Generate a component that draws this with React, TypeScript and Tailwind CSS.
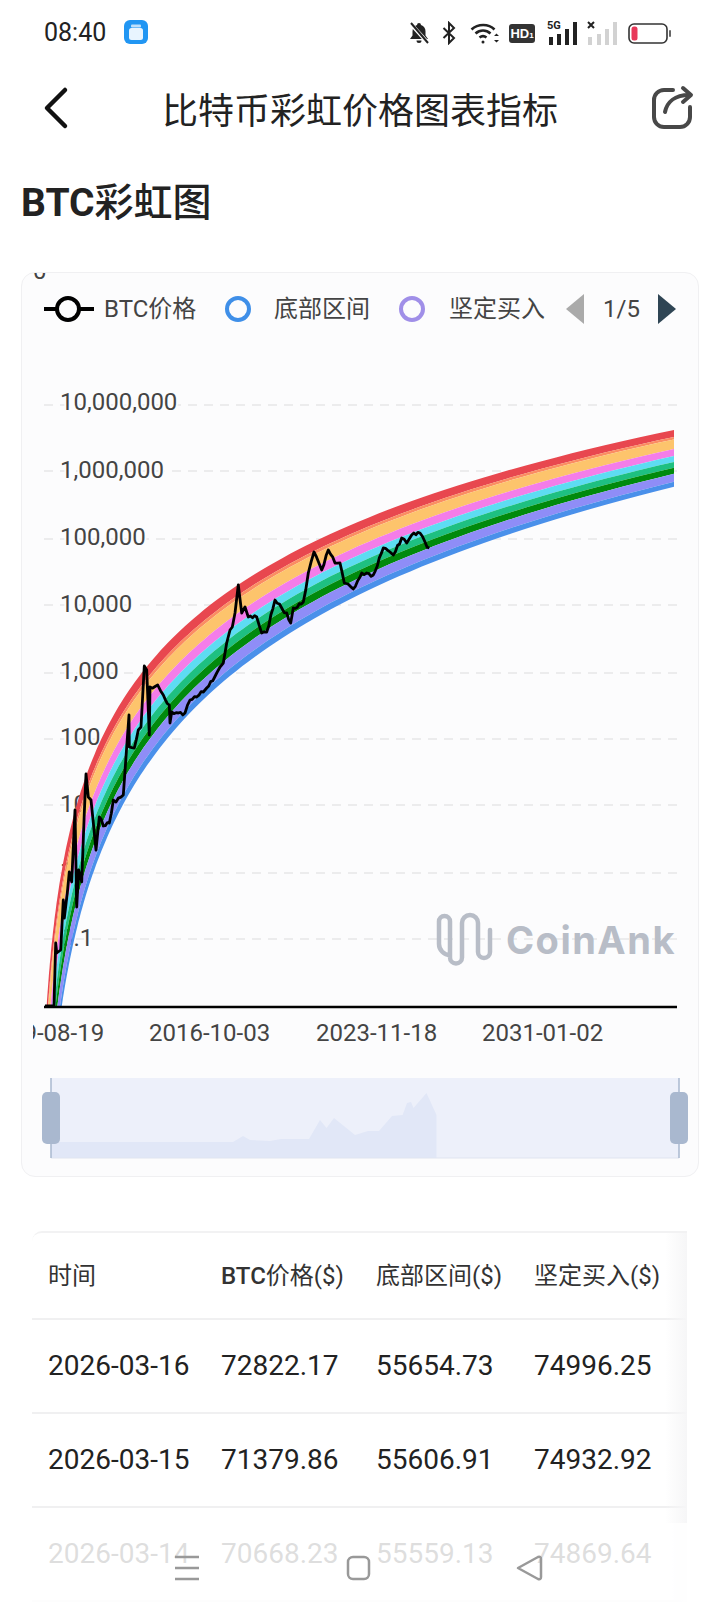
import React from "react";

const FONT = "[font-family:Roboto,'Noto_Sans_CJK_SC',sans-serif]";

// band edges at the right end of the chart, in px below the top curve
const EDGES = [0, 7, 9.5, 19, 26, 32, 38, 44, 52, 57];
const BANDS = ["#e8474f", "#fb8d62", "#fdc46c", "#f47de9", "#5ddcf2", "#1ec081", "#018a0c", "#8f8df7", "#4a90ea"];

const GRID = [405, 471, 539, 605, 673, 739, 805, 873, 939];
const Y_LABELS: [string, number][] = [
	["10,000,000", 402],
	["1,000,000", 470],
	["100,000", 537],
	["10,000", 604],
	["1,000", 671],
	["100", 737],
	["10", 804],
	["1", 871],
	["0.1", 938],
];

const PRICE = [
	[45, 1006], [54, 1006], [55.7, 943], [56.7, 953], [60.7, 950], [63.3, 900], [64.3, 918], [67.3, 893], [69.3, 872], [71.7, 882],
	[75, 810], [76.7, 907], [78.7, 870], [81.7, 882], [84.3, 813], [86, 774], [88.3, 797], [91, 800], [96, 850], [99.3, 817],
	[103.3, 826], [109.3, 823], [113.3, 800], [116, 802], [123.3, 795], [126.7, 747], [129, 715], [129.3, 747], [134.3, 748], [138.3, 730],
	[141, 727], [144.3, 666], [146.7, 670], [149.3, 735], [150, 687], [157.7, 685], [163.3, 695], [169.3, 705], [170, 723], [171.7, 712],
	[178.3, 713], [185, 713], [190, 700], [196.7, 697], [203.3, 692], [206.7, 688], [216.7, 673], [220, 667], [223.3, 663], [226.7, 643],
	[230, 630], [232.3, 627], [235, 613], [238.3, 585], [241.7, 613], [245, 607], [248.3, 617], [256.7, 617], [261.7, 633], [266.7, 632],
	[275, 600], [281.7, 608], [286.7, 613], [290.7, 623], [293.3, 608], [303.3, 602], [308.3, 573], [314, 552], [321.7, 570], [328.3, 550],
	[335, 563], [340, 563], [344.3, 583], [348, 584], [353.3, 589], [360, 577], [361.7, 573], [366.7, 573], [373.3, 575], [383.3, 548],
	[390, 552], [393.3, 555], [401.7, 538], [406.7, 543], [411.7, 535], [420, 533], [425, 542], [429.3, 548],
];

const OVERVIEW = [
	[51, 1142], [233, 1142], [243, 1136], [250, 1140], [270, 1141], [281, 1139], [309, 1139], [320, 1120], [326.5, 1128], [334, 1118],
	[355, 1135], [368, 1131], [379, 1131], [392, 1116], [402.6, 1115], [407, 1103], [411, 1102], [413.5, 1108], [426.5, 1093], [436.5, 1115], [436.5, 1158], [51, 1158],
];

const ROWS = [
	["2026-03-16", "72822.17", "55654.73", "74996.25"],
	["2026-03-15", "71379.86", "55606.91", "74932.92"],
	["2026-03-14", "70668.23", "55559.13", "74869.64"],
];

const toPoints = (pts: number[][]) => pts.map((p) => p.join(",")).join(" ");

// fills long segments with small daily wiggles so the line reads as market data
function withNoise(pts: number[][]) {
	const out: number[][] = [pts[0]];
	for (let i = 1; i < pts.length; i++) {
		const [x0, y0] = pts[i - 1];
		const [x1, y1] = pts[i];
		const steps = Math.max(1, Math.floor((x1 - x0) / 2));
		for (let s = 1; s <= steps; s++) {
			const k = s / steps;
			const x = x0 + (x1 - x0) * k;
			const wiggle = s === steps || x < 60 ? 0 : Math.sin(x * 7.3) * 1.4 + Math.sin(x * 2.9) * 0.9;
			out.push([+x.toFixed(1), +(y0 + (y1 - y0) * k + wiggle).toFixed(1)]);
		}
	}
	return out;
}

// log curve of the rainbow, the gap between bands widens toward the left
function edgeY(x: number, offset: number) {
	const top = 517 + 134 * (5.805 - Math.log(x - 38));
	const spread = 1 + 0.42 * Math.log(635 / (x - 38));
	return top + offset * spread;
}

function bandPath(upper: number, lower: number) {
	const xs: number[] = [];
	for (let t = 0.4; t < Math.log(636); t += 0.03) xs.push(38 + Math.exp(t));
	xs.push(674);
	const top = xs.map((x) => `${x.toFixed(1)},${edgeY(x, upper).toFixed(1)}`);
	const bottom = [...xs].reverse().map((x) => `${x.toFixed(1)},${edgeY(x, lower).toFixed(1)}`);
	return `M${top.join("L")}L${bottom.join("L")}Z`;
}

function StatusBar() {
	return (
		<div className="relative h-[64px] flex items-center">
			<span className="ml-[44px] text-[25px] leading-none text-[#222]">08:40</span>
			<svg className="ml-[18px]" width="24" height="24" viewBox="0 0 24 24">
				<rect width="24" height="24" rx="6" fill="#2196f3" />
				<rect x="7" y="4.5" width="10" height="3" rx="1" fill="#bfe0fb" />
				<rect x="5" y="8" width="14" height="12" rx="2.5" fill="#e8f4fe" />
			</svg>
			<div className="absolute left-[408px] top-[20px] flex items-center">
				<svg width="22" height="24" viewBox="0 0 22 24" fill="#222">
					<path d="M11 2a2 2 0 0 1 2 2c3 1 4.5 3.5 4.5 6.5v4l2.5 3.5H2l2.500-3.500v-4C4.500 7.500 6 5 9 4a2 2 0 0 1 2-2z" />
					<path d="M8.500 19.500h5a2.500 2.500 0 0 1-5 0z" />
					<path d="M2 2l18 20" stroke="#fff" strokeWidth="4" />
					<path d="M3 2l17 20" stroke="#222" strokeWidth="2" />
				</svg>
				<svg className="ml-[12px]" width="14" height="24" viewBox="0 0 14 24" fill="none" stroke="#222" strokeWidth="2">
					<path d="M1.500 7l10.500 10-5 5V2l5 5L1.500 17" />
				</svg>
				<svg className="ml-[14px]" width="30" height="24" viewBox="0 0 30 24" fill="none" stroke="#222" strokeWidth="2.600">
					<path d="M1.500 8.500c6.500-6 17-6 23 0" />
					<path d="M5.500 12.500c4.500-4 10.500-4 15 0" />
					<path d="M9.500 16.500c2.500-2 4.500-2 7 0" />
					<circle cx="13" cy="21" r="1.500" fill="#222" stroke="none" />
					<path d="M24 15l2.500-2.500 2.500 2.500z M24 19l2.500 2.500 2.500-2.500z" fill="#222" stroke="none" />
				</svg>
				<div className="ml-[9px] w-[26px] h-[19px] rounded-[3px] bg-[#333] text-white text-[13px] leading-[19px] font-bold text-center [font-family:'Liberation_Sans',sans-serif]">HD<span className="text-[8px]">1</span></div>
				<svg className="ml-[12px]" width="32" height="26" viewBox="0 0 32 26" fill="#222">
					<text x="0" y="9" fontSize="11" fontWeight="700">5G</text>
					<rect x="2" y="17" width="4" height="8" />
					<rect x="10" y="14" width="4" height="11" />
					<rect x="18" y="9" width="4" height="16" />
					<rect x="26" y="2" width="4" height="23" />
				</svg>
				<svg className="ml-[8px]" width="31" height="26" viewBox="0 0 31 26" fill="#d2d2d2">
					<path d="M1 2l6 6M7 2l-6 6" stroke="#222" strokeWidth="2" />
					<rect x="1" y="17" width="4" height="8" />
					<rect x="10" y="14" width="4" height="11" />
					<rect x="18" y="9" width="4" height="16" />
					<rect x="26" y="2" width="4" height="23" />
				</svg>
				<svg className="ml-[10px]" width="44" height="24" viewBox="0 0 44 24" fill="none">
					<rect x="1" y="3" width="38" height="19" rx="5" stroke="#333" strokeWidth="1.600" />
					<rect x="3.500" y="5.500" width="6" height="14" rx="2.500" fill="#e8385a" />
					<rect x="41" y="9" width="2" height="7" rx="1" fill="#666" />
				</svg>
			</div>
		</div>
	);
}

function Header() {
	return (
		<div className="relative h-[90px] flex items-center justify-center">
			<svg className="absolute left-[40px] top-[22px]" width="30" height="44" viewBox="0 0 30 44" fill="none" stroke="#111" strokeWidth="4.500" strokeLinecap="round" strokeLinejoin="round">
				<path d="M25 4L7 22l18 18" />
			</svg>
			<h1 className="pt-[6px] text-[36px] leading-none font-normal text-[#222]">比特币彩虹价格图表指标</h1>
			<svg className="absolute left-[650px] top-[18px]" width="46" height="50" viewBox="650 82 46 50" fill="none" stroke="#484848" strokeWidth="4" strokeLinecap="round" strokeLinejoin="round">
				<path d="M673 90h-9a10 10 0 0 0-10 10v17a10 10 0 0 0 10 10h16a10 10 0 0 0 10-10v-10" />
				<path d="M665 112c2-10 10-17 24-17" />
				<path d="M683 88l8 7-8 7" />
			</svg>
		</div>
	);
}

function Legend() {
	return (
		<div className="relative h-[72px] text-[24px] leading-none text-[#444]">
			<div className="absolute left-[11px] top-0 h-[7px] overflow-hidden">
				<span className="block leading-[24px] -mt-[14px]">0</span>
			</div>
			<div className="flex items-center h-[30px] pl-[22px] pt-[21px] box-content">
				<svg width="50" height="30" viewBox="0 0 50 30" fill="none" stroke="#000" strokeWidth="4">
					<path d="M0 15h12M36 15h14" />
					<circle cx="24" cy="15" r="11" />
				</svg>
				<span className="ml-[10px] w-[95px] whitespace-nowrap">BTC价格</span>
				<span className="ml-[26px] w-[26px] h-[26px] rounded-full border-[4px] border-[#3f8fe8]" />
				<span className="ml-[23px] w-[99px] whitespace-nowrap">底部区间</span>
				<span className="ml-[26px] w-[26px] h-[26px] rounded-full border-[4px] border-[#a08fe8]" />
				<span className="ml-[24px] w-[99px] whitespace-nowrap">坚定买入</span>
				<svg className="ml-[18px]" width="18" height="30" viewBox="0 0 18 30" fill="#aaa">
					<path d="M18 0v30L0 15z" />
				</svg>
				<span className="ml-[19px] w-[37px] whitespace-nowrap">1/5</span>
				<svg className="ml-[18px]" width="18" height="30" viewBox="0 0 18 30" fill="#2f4554">
					<path d="M0 0v30l18-15z" />
				</svg>
			</div>
		</div>
	);
}

function RainbowChart() {
	return (
		<svg className="block" width="676" height="831" viewBox="22 345 676 831" fontSize="24" fill="#444">
			<defs>
				<clipPath id="plot">
					<rect x="44" y="380" width="631" height="627" />
				</clipPath>
				<clipPath id="dates">
					<rect x="33" y="1010" width="640" height="50" />
				</clipPath>
			</defs>

			{GRID.map((y) => (
				<line key={y} x1="44" x2="677" y1={y} y2={y} stroke="#e6e6e8" strokeWidth="1.500" strokeDasharray="9 7" />
			))}
			{Y_LABELS.map(([label, y]) => (
				<text key={label} x="60" y={y} dominantBaseline="central" stroke="#fcfcfd" strokeWidth="4" className="[paint-order:stroke]">
					{label}
				</text>
			))}

			{/* watermark */}
			<g fill="none" stroke="#b8bdc7" strokeWidth="4.500" strokeLinecap="round">
				<path d="M450 955a11 11 0 0 1-11-11v-22.500a5.500 5.500 0 0 1 11 0v36a6 6 0 0 0 12 0v-34.500a8 8 0 0 1 16 0v29a6 6 0 0 0 12 0v-22" />
			</g>
			<text x="506" y="954" fontSize="38" fontWeight="700" letterSpacing="1.500" fill="#b8bdc7" className="[font-family:Inter,sans-serif]">
				CoinAnk
			</text>

			<g clipPath="url(#plot)">
				{BANDS.map((color, i) => (
					<path key={color} d={bandPath(EDGES[i], EDGES[i + 1])} fill={color} />
				))}
			</g>
			<polyline points={toPoints(withNoise(PRICE))} fill="none" stroke="#000" strokeWidth="2.800" strokeLinejoin="round" />
			<line x1="44" x2="677" y1="1007" y2="1007" stroke="#000" strokeWidth="2.500" />

			<g clipPath="url(#dates)">
				<text x="-17" y="1033" dominantBaseline="central">2009-08-19</text>
				<text x="149" y="1033" dominantBaseline="central">2016-10-03</text>
				<text x="316" y="1033" dominantBaseline="central">2023-11-18</text>
				<text x="482" y="1033" dominantBaseline="central">2031-01-02</text>
			</g>

			{/* range slider */}
			<rect x="51" y="1078" width="628" height="80" fill="#edf0fa" />
			<polygon points={toPoints(OVERVIEW)} fill="#e1e7f7" />
			<line x1="51" x2="679" y1="1158" y2="1158" stroke="#dfe4f0" />
			<line x1="51" x2="51" y1="1078" y2="1158" stroke="#a9b8cf" strokeWidth="1.500" />
			<line x1="679" x2="679" y1="1078" y2="1158" stroke="#a9b8cf" strokeWidth="1.500" />
			<rect x="42" y="1092" width="18" height="52" rx="5" fill="#a9b8cf" />
			<rect x="670" y="1092" width="18" height="52" rx="5" fill="#a9b8cf" />
		</svg>
	);
}

function DataTable() {
	return (
		<div className="relative ml-[32px] mt-[54px] w-[655px] border-t-2 border-[#f2f2f3] rounded-tl-[10px]">
			<div className="flex items-center h-[87px] border-b-2 border-[#f0f0f1] text-[24px] text-[#333]">
				<span className="pl-[16px] w-[189px]">时间</span>
				<span className="w-[155px] whitespace-nowrap"><span className="font-medium">BTC</span>价格($)</span>
				<span className="w-[158px] whitespace-nowrap">底部区间($)</span>
				<span className="whitespace-nowrap">坚定买入($)</span>
			</div>
			{ROWS.map((row) => (
				<div key={row[0]} className="flex items-center h-[94px] border-b-2 border-[#f0f0f1] text-[28px] text-[#222]">
					<span className="pl-[16px] w-[189px]">{row[0]}</span>
					<span className="w-[155px]">{row[1]}</span>
					<span className="w-[158px]">{row[2]}</span>
					<span>{row[3]}</span>
				</div>
			))}
			<div className="absolute right-0 top-0 bottom-0 w-[22px] bg-gradient-to-r from-transparent to-[#f6f6f7]" />
		</div>
	);
}

function NavBar() {
	return (
		<div className="absolute left-0 right-0 bottom-0 h-[89px] bg-white/85">
			<svg className="block" width="720" height="89" viewBox="0 1523 720 89" fill="none" stroke="#999" strokeWidth="2.500" strokeLinejoin="round">
				<path d="M175 1557h24M175 1568h24M175 1579h24" />
				<rect x="348" y="1557" width="21" height="22" rx="5" />
				<path d="M518 1568l20-11q3-1 3 2v18q0 3-3 2z" />
			</svg>
		</div>
	);
}

export default function App() {
	return (
		<div className={`relative w-[720px] h-[1612px] overflow-hidden bg-white ${FONT}`}>
			<StatusBar />
			<Header />
			<h2 className="h-[98px] pl-[21px] pt-[30px] text-[39px] leading-[38px] font-medium text-[#222]"><span className="font-bold">BTC</span>彩虹图</h2>
			<div className="ml-[21px] mt-[20px] w-[678px] h-[905px] overflow-hidden rounded-[14px] border border-[#f0f0f2] bg-[#fcfcfd]">
				<Legend />
				<RainbowChart />
			</div>
			<DataTable />
			<NavBar />
		</div>
	);
}
